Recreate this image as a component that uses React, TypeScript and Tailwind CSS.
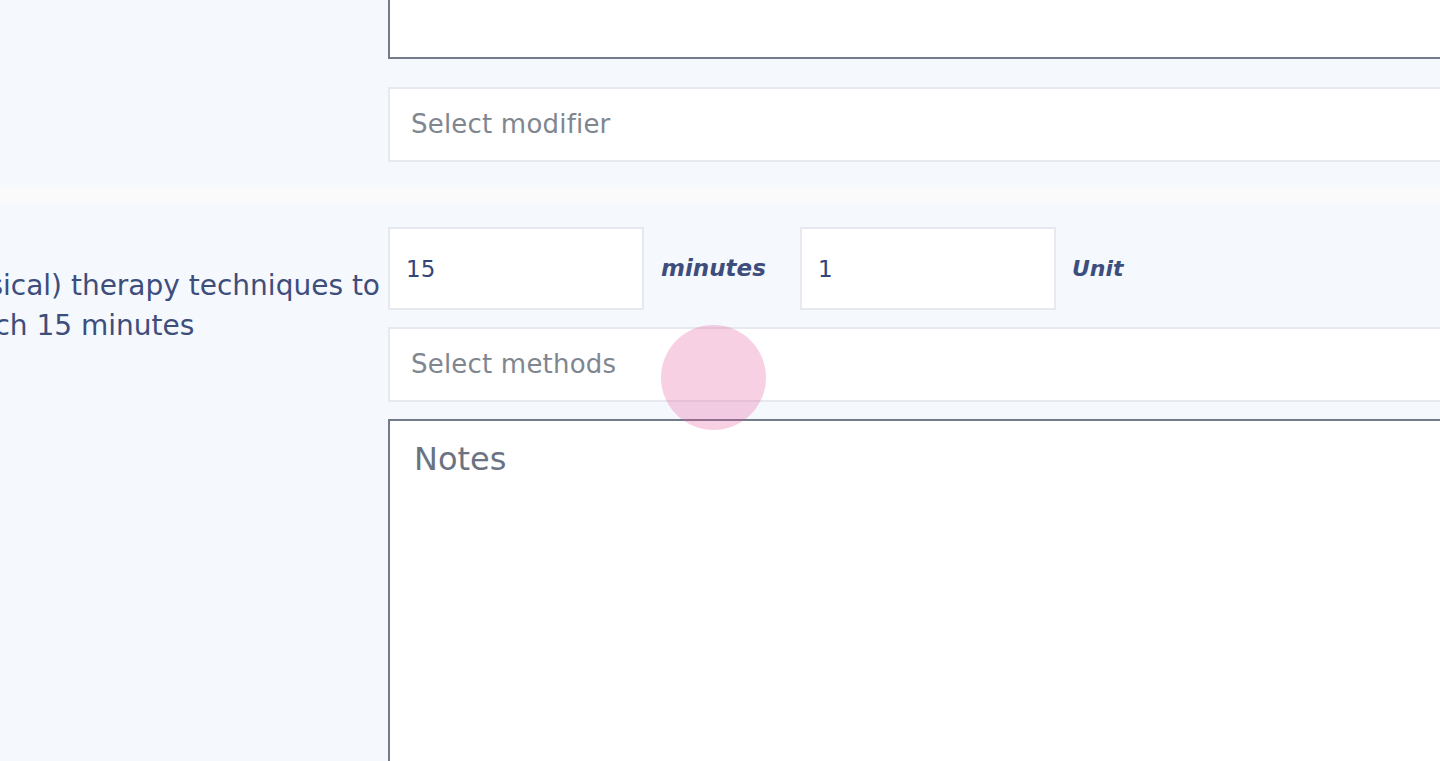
import React from 'react';

const font = { fontFamily: '"DejaVu Sans", "Noto Sans", sans-serif' };

function SelectBox({ placeholder }: { placeholder: string }) {
  return (
    <div className="h-[75px] w-full bg-white border-2 border-[#e6e9ef] flex items-center px-[21px]">
      <span className="text-[26px] tracking-[0.2px] text-[#80868f]">{placeholder}</span>
    </div>
  );
}

export default function App() {
  return (
    <div className="w-[1440px] h-[761px] overflow-hidden bg-[#f5f8fc] relative" style={font}>
      <div className="-mt-[80px]">
        {/* Modifier row */}
        <div className="flex pb-[25px]">
          <div className="w-[388px] shrink-0" />
          <div className="w-[1200px] shrink-0">
            <textarea
              className="block w-full h-[139px] bg-white border-2 border-[#737b8b] resize-none outline-none"
              readOnly
            />
            <div className="mt-[28px]">
              <SelectBox placeholder="Select modifier" />
            </div>
          </div>
        </div>

        <div className="h-[16px] bg-[#fafafa]" />

        {/* Procedure row */}
        <div className="flex pt-[24px]">
          <div className="w-[388px] shrink-0 overflow-hidden pt-[39px] pr-[8px] text-[28px] leading-[40px] text-[#3d4e7c]">
            <div className="flex justify-end">
              <span className="whitespace-nowrap">Application of one or more (physical) therapy techniques to</span>
            </div>
            <div className="whitespace-nowrap -ml-[40px]">each 15 minutes</div>
          </div>
          <div className="w-[1200px] shrink-0">
            <div className="flex items-center">
              <input
                className="w-[256px] h-[83px] bg-white border-2 border-[#e6e9ef] px-[16px] text-[23px] text-[#34457a] outline-none"
                defaultValue="15"
              />
              <div className="w-[156px] pl-[17px] text-[23px] italic font-semibold text-[#3d4e7c]">minutes</div>
              <input
                className="w-[256px] h-[83px] bg-white border-2 border-[#e6e9ef] px-[16px] text-[23px] text-[#34457a] outline-none"
                defaultValue="1"
              />
              <div className="pl-[16px] text-[22px] italic font-semibold text-[#3d4e7c]">Unit</div>
            </div>
            <div className="mt-[17px]">
              <SelectBox placeholder="Select methods" />
            </div>
            <textarea
              className="block mt-[17px] w-full h-[420px] bg-white border-2 border-[#737b8b] resize-none outline-none px-[24px] pt-[14px] text-[32px] placeholder:text-[#6b7383]"
              placeholder="Notes"
              readOnly
            />
          </div>
        </div>
      </div>

      {/* click indicator */}
      <div className="absolute left-[661px] top-[325px] w-[105px] h-[105px] rounded-full bg-[rgba(230,80,150,0.27)] pointer-events-none" />
    </div>
  );
}
